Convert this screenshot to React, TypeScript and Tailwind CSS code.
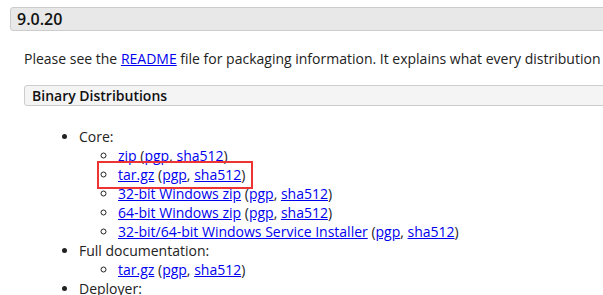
import React from "react";

const A = ({ children }: { children: React.ReactNode }) => (
  <a href="#" className="text-[#0000ee] underline">{children}</a>
);

const Sigs = () => (
  <>
    {" "}(<A>pgp</A>, <A>sha512</A>)
  </>
);

export default function App() {
  return (
    <div
      className="w-[603px] h-[295px] overflow-hidden bg-white text-[14px] text-[#222] leading-[19px]"
      style={{ fontFamily: '"Open Sans", sans-serif' }}
    >
      <div className="w-[900px] pt-[7px] pl-[10px]">
        <div className="h-[24px] bg-[#e8e8e8] border border-[#cccccc] rounded-[3px] pl-[6px] flex items-center text-[16px] font-semibold text-[#111]">
          9.0.20
        </div>
        <div className="pl-[14px]">
          <p className="mt-[18px] whitespace-nowrap">
            Please see the <A>README</A> file for packaging information. It explains what every distribution contains.
          </p>
          <div className="mt-[17px] h-[21px] bg-[#f4f4f4] border border-[#cccccc] rounded-[3px] pl-[7px] flex items-center font-semibold text-[#111]">
            Binary Distributions
          </div>
          <ul className="mt-[21px] pl-[55px] list-disc">
            <li>
              Core:
              <ul className="pl-[39px] list-[circle]">
                <li><A>zip</A><Sigs /></li>
                <li>
                  <span className="relative">
                    <A>tar.gz</A><Sigs />
                    <span className="absolute left-[-21px] right-[-8px] top-[-4px] bottom-[-5px] border-2 border-[#ee3333] pointer-events-none" />
                  </span>
                </li>
                <li><A>32-bit Windows zip</A><Sigs /></li>
                <li><A>64-bit Windows zip</A><Sigs /></li>
                <li><A>32-bit/64-bit Windows Service Installer</A><Sigs /></li>
              </ul>
            </li>
            <li>
              Full documentation:
              <ul className="pl-[39px] list-[circle]">
                <li><A>tar.gz</A><Sigs /></li>
              </ul>
            </li>
            <li>Deployer:</li>
          </ul>
        </div>
      </div>
    </div>
  );
}
